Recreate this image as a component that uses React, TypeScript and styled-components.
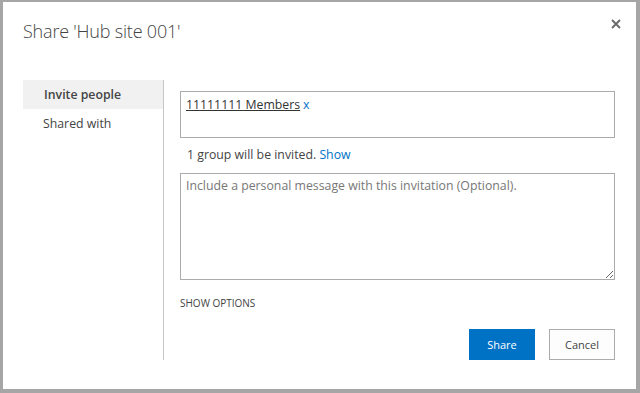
import styled, { createGlobalStyle } from "styled-components";

const GlobalStyle = createGlobalStyle`
  html, body {
    margin: 0;
    padding: 0;
    background: #a6a6a6;
  }
  body {
    font-family: "Open Sans", "Noto Sans", sans-serif;
  }
`;

const Dialog = styled.div`
  margin: 2px 4px 4px 3px;
  height: 387px;
  background: #fff;
  display: flex;
  flex-direction: column;
  box-sizing: border-box;
`;

const Header = styled.div`
  display: flex;
  justify-content: space-between;
  align-items: flex-start;
  height: 78px;
  padding: 16px 15px 0 20px;
  box-sizing: border-box;
`;

const Title = styled.h1`
  margin: 0;
  font-size: 18px;
  font-weight: 300;
  letter-spacing: -0.2px;
  color: #444;
  line-height: 27px;
`;

const CloseButton = styled.button`
  border: none;
  background: none;
  padding: 0;
  margin-top: 1px;
  width: 10px;
  height: 10px;
  display: flex;
  cursor: pointer;
`;

const Body = styled.div`
  display: flex;
  padding-left: 20px;
  padding-right: 21px;
`;

const Nav = styled.ul`
  list-style: none;
  margin: 0;
  padding: 0;
  width: 140px;
  height: 280px;
  border-right: 1px solid #c6c6c6;
`;

const NavItem = styled.li<{ active?: boolean }>`
  height: 29px;
  line-height: 29px;
  font-size: 12.3px;
  color: #444;
  padding-left: ${p => (p.active ? "21px" : "20px")};
  background: ${p => (p.active ? "#f1f1f1" : "transparent")};
  font-weight: ${p => (p.active ? 600 : 400)};
`;

const Content = styled.div`
  flex: 1;
  padding: 11px 0 0 16px;
  display: flex;
  flex-direction: column;
`;

const PeoplePicker = styled.div`
  height: 47px;
  border: 1px solid #ababab;
  box-sizing: border-box;
  padding: 3px 5px;
  font-size: 12.3px;
  line-height: 20px;
`;

const Member = styled.span`
  color: #333;
  text-decoration: underline;
`;

const Remove = styled.span`
  color: #0072c6;
  margin-left: 3px;
`;

const Hint = styled.div`
  font-size: 12.3px;
  color: #444;
  padding-left: 7px;
  margin-top: 8px;
  line-height: 18px;
`;

const Link = styled.a`
  color: #0072c6;
  text-decoration: none;
`;

const Message = styled.textarea`
  margin-top: 9px;
  height: 107px;
  border: 1px solid #ababab;
  box-sizing: border-box;
  padding: 3px 5px;
  font-family: "Open Sans", "Noto Sans", sans-serif;
  font-size: 12.3px;
  resize: vertical;
  outline: none;
  &::placeholder {
    color: #777;
  }
`;

const Options = styled.div`
  margin-top: 15px;
  font-size: 10px;
  color: #444;
  line-height: 16px;
`;

const Footer = styled.div`
  display: flex;
  justify-content: flex-end;
  gap: 14px;
  margin-top: 18px;
`;

const Button = styled.button<{ primary?: boolean }>`
  width: 66px;
  height: 31px;
  font-family: "Open Sans", "Noto Sans", sans-serif;
  font-size: 11px;
  border: 1px solid ${p => (p.primary ? "#0072c6" : "#ababab")};
  background: ${p => (p.primary ? "#0072c6" : "#fdfdfd")};
  color: ${p => (p.primary ? "#fff" : "#444")};
  cursor: pointer;
`;

export default function App() {
  return (
    <>
      <GlobalStyle />
      <Dialog>
        <Header>
          <Title>Share 'Hub site 001'</Title>
          <CloseButton aria-label="Close">
            <svg width="10" height="10" viewBox="0 0 10 10">
              <path d="M1 1L9 9M9 1L1 9" stroke="#666" strokeWidth="1.8" />
            </svg>
          </CloseButton>
        </Header>
        <Body>
          <Nav>
            <NavItem active>Invite people</NavItem>
            <NavItem>Shared with</NavItem>
          </Nav>
          <Content>
            <PeoplePicker>
              <Member>11111111 Members</Member>
              <Remove>x</Remove>
            </PeoplePicker>
            <Hint>
              1 group will be invited. <Link href="#">Show</Link>
            </Hint>
            <Message placeholder="Include a personal message with this invitation (Optional)." />
            <Options>SHOW OPTIONS</Options>
            <Footer>
              <Button primary>Share</Button>
              <Button>Cancel</Button>
            </Footer>
          </Content>
        </Body>
      </Dialog>
    </>
  );
}
